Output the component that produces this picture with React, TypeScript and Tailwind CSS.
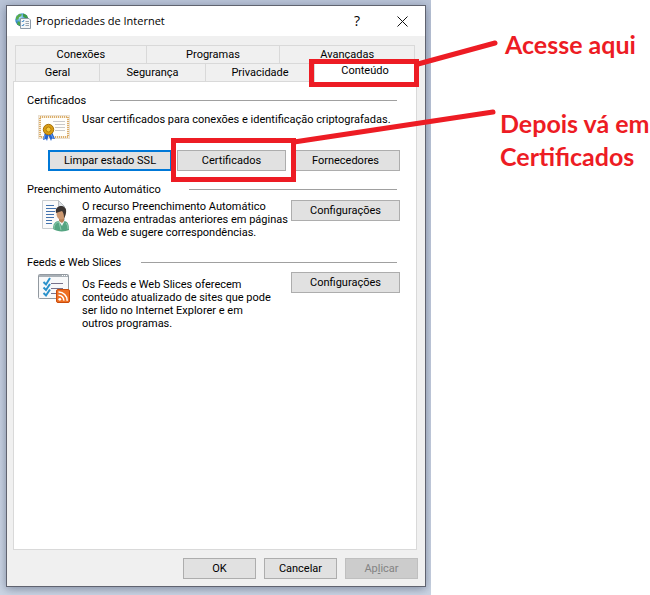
import type { ReactNode } from 'react';

interface SectionProps {
  title: string;
  lineGap: string;
  children: ReactNode;
}

interface PushButtonProps {
  children: ReactNode;
  className?: string;
  disabled?: boolean;
  focused?: boolean;
}

const uiFont = 'font-[Roboto,sans-serif]';

function PushButton({ children, className = '', disabled, focused }: PushButtonProps) {
  const look = disabled
    ? 'border border-[#bfbfbf] bg-[#cccccc] text-[#838383]'
    : focused
      ? 'border-2 border-[#0078d7] bg-[#e1e1e1]'
      : 'border border-[#adadad] bg-[#e1e1e1]';

  return (
    <button
      type="button"
      disabled={disabled}
      className={`flex h-[21px] shrink-0 items-center justify-center leading-[13px] ${look} ${className}`}
    >
      {children}
    </button>
  );
}

function Section({ title, lineGap, children }: SectionProps) {
  return (
    <section>
      <div className={`flex items-center pr-[3px] ${lineGap}`}>
        <h2 className="leading-[13px] whitespace-nowrap">{title}</h2>
        <span className="h-px flex-1 bg-[#a0a0a0]" />
      </div>
      {children}
    </section>
  );
}

function InternetIcon() {
  return (
    <svg viewBox="0 0 16 16" className="size-4 shrink-0" aria-hidden="true">
      <defs>
        <radialGradient id="globe" cx="0.35" cy="0.3" r="0.8">
          <stop offset="0" stopColor="#b9e4fa" />
          <stop offset="0.5" stopColor="#3c93cc" />
          <stop offset="1" stopColor="#12407c" />
        </radialGradient>
      </defs>
      <circle cx="6.8" cy="6.8" r="6.6" fill="url(#globe)" />
      <path d="M1 4 4 1l3 .2-1 2-2 1-.5 2L1 7Z" fill="#5aab4b" />
      <path d="M8 .4 11.5 2l1.6 3-2.5.3L8 3.5Z" fill="#3f9a45" />
      <path d="M3 8.2 5 9v4L2 11.2Z" fill="#4ba84a" />
      <path d="M5.5 5.5H14L15.500 7v8.500h-10Z" fill="#f4f6f8" stroke="#8d9aa8" />
      <path d="m6.8 8 1 1 1.3-2M6.8 12l1 1 1.3-2" fill="none" stroke="#3484c4" />
      <path d="M10.5 8.500H14M10.5 10.500H14M10.5 12.500H14" stroke="#9aa4ae" />
    </svg>
  );
}

function CertificateIcon() {
  return (
    <svg viewBox="0 0 32 32" className="size-8 shrink-0" aria-hidden="true">
      <rect x="0.5" y="2.5" width="31" height="23" fill="#f6ecdc" stroke="#e9dfd0" />
      <rect x="3" y="5" width="26" height="18" fill="#fffefa" />
      <rect x="2" y="4" width="28" height="20" fill="none" stroke="#dcae69" strokeWidth="2" strokeDasharray="1 1" />
      <path d="M15 8.500h12M17 11.500h10M17 14.500h10M17 17.500h10" stroke="#c9c9c9" />
      <path d="m7 19-2 8 3-1 1 2 2-7ZM14 19l3 7-3-.5-1 2.500-3-7Z" fill="#2464d0" />
      <path d="m7 22-1 4M13 21l2 4" stroke="#6ea3f2" />
      <circle cx="10.5" cy="16.5" r="5.2" fill="#d89d13" stroke="#a77106" />
      <circle cx="10.5" cy="16.5" r="2.5" fill="#f5cb3c" stroke="#b47b08" />
    </svg>
  );
}

function AutoCompleteIcon() {
  return (
    <svg viewBox="0 0 32 32" className="size-8 shrink-0" aria-hidden="true">
      <path d="M4.5.5h16l6 6v22h-22Z" fill="#fafafa" stroke="#c9cdd0" />
      <path d="M20.5.5v6h6Z" fill="#dfe3e6" stroke="#b9bec2" />
      <path
        d="M8 5.500h8M8 8.500h10M8 11.500h9M8 14.500h8M8 17.500h8M8 20.500h6M8 23.500h6"
        stroke="#4373ae"
      />
      <path d="M15 29c0-5 2-8 6-8h5c4 0 5 4 5 9-4 2-12 2-16-1Z" fill="#55a582" />
      <path d="M16 29c0-4 2-7 5-7l2 8M30 29c0-3-1-5-2-6" fill="none" stroke="#8fcdaf" />
      <path d="m20 20 4 6 3-6Z" fill="#f1f5f3" />
      <path d="M21 18h5v3l-2 2-3-2Z" fill="#b77f55" />
      <ellipse cx="23" cy="14" rx="4.5" ry="5.5" fill="#cc9870" />
      <path d="M18 13c-1-5 2-7 5-7s6 2 5 7c-1 3-1 4-2 5 0-4-1-6-2-7-2 1-4 1-6 2Z" fill="#3b3431" />
    </svg>
  );
}

function FeedsIcon() {
  return (
    <svg viewBox="0 0 32 32" className="size-8 shrink-0" aria-hidden="true">
      <rect x="0.5" y="2.5" width="30" height="24" rx="1" fill="#f8f9fa" stroke="#9299a0" />
      <path d="M1 4h29" stroke="#a9b0b6" strokeWidth="2" />
      <path d="M24 3.500h1M26 3.500h1M28 3.500h1" stroke="#ffffff" />
      <path d="M13 11.500h12M13 16.500h12M13 21.500h6" stroke="#77728b" />
      <path
        d="m5.500 10 2.500 2.500L12 6M5.500 15.500 8 18l4-6M5.500 21 8 23.500l4-6"
        fill="none"
        stroke="#2991cb"
        strokeWidth="2"
      />
      <rect x="18.5" y="17.5" width="13" height="13" rx="1.5" fill="#ee6f22" stroke="#c94b0b" />
      <circle cx="21.8" cy="27.3" r="1.4" fill="#ffffff" />
      <path
        d="M20.5 23.300a5 5 0 0 1 5.300 5.300M20.5 20a8.500 8.500 0 0 1 8.700 8.700"
        fill="none"
        stroke="#ffffff"
        strokeWidth="1.6"
      />
    </svg>
  );
}

function Tab({ children, selected }: { children: ReactNode; selected?: boolean }) {
  return (
    <button
      type="button"
      role="tab"
      aria-selected={!!selected}
      className={
        selected
          ? 'relative z-10 -mb-px flex h-[19px] items-center justify-center border-l border-[#d9d9d9] bg-white pb-1 leading-[13px]'
          : 'flex h-[18px] items-center justify-center border-t border-l border-[#d9d9d9] leading-[13px]'
      }
    >
      {children}
      {selected && <span className="absolute -top-1 -right-1 -bottom-[5px] -left-[6px] border-5 border-[#ed1c24]" />}
    </button>
  );
}

function Dialog() {
  return (
    <div
      role="dialog"
      aria-label="Propriedades de Internet"
      className="flex flex-1 flex-col border border-[#60636f] bg-[#f0f0f0] shadow-[0_2px_9px_rgba(40,50,80,0.45)]"
    >
      <header className="flex h-[30px] items-center bg-white pr-[17px] pl-2">
        <InternetIcon />
        <h1 className="flex-1 pl-[5px] font-['Open_Sans',sans-serif] text-[11px] leading-4">Propriedades de Internet</h1>
        <button type="button" aria-label="Ajuda" className="w-4 font-['Open_Sans',sans-serif] text-[14px] leading-4">
          ?
        </button>
        <button type="button" aria-label="Fechar" className="ml-8">
          <svg viewBox="0 0 11 11" className="size-[11px]" aria-hidden="true">
            <path d="m.5.5 10 10M10.5.5l-10 10" stroke="#111111" />
          </svg>
        </button>
      </header>

      <div className="flex flex-1 flex-col pt-[9px] pr-2 pb-[7px] pl-[6px]">
        <div role="tablist" className="mx-[2px]">
          <div className="grid grid-cols-[131fr_134fr_135fr] border-r border-[#d9d9d9]">
            <Tab>Conexões</Tab>
            <Tab>Programas</Tab>
            <Tab>Avançadas</Tab>
          </div>
          <div className="grid grid-cols-[84fr_106fr_109fr_101px]">
            <Tab>Geral</Tab>
            <Tab>Segurança</Tab>
            <Tab>Privacidade</Tab>
            <Tab selected>Conteúdo</Tab>
          </div>
        </div>

        <main className="flex-1 border border-[#d9d9d9] bg-white pt-3 pr-4 pl-[13px]">
          <Section title="Certificados" lineGap="gap-6">
            <div className="flex gap-3 pt-[6px] pl-[11px]">
              <CertificateIcon />
              <p className="flex-1 leading-[13px]">Usar certificados para conexões e identificação criptografadas.</p>
            </div>
            <div className="mt-[5px] flex justify-end gap-[5px]">
              <PushButton className="w-[124px]" focused>
                Limpar estado SSL
              </PushButton>
              <div className="relative">
                <PushButton className="w-[109px]">Certificados</PushButton>
                <span className="pointer-events-none absolute -top-3 -right-[10px] -bottom-[11px] -left-[6px] z-10 border-5 border-[#ed1c24]" />
              </div>
              <PushButton className="w-[109px]">Fornecedores</PushButton>
            </div>
          </Section>

          <div className="pt-3">
            <Section title="Preenchimento Automático" lineGap="gap-7">
              <div className="flex items-start pt-1 pl-[11px]">
                <AutoCompleteIcon />
                <p className="flex-1 pl-3 leading-[13px]">
                  O recurso Preenchimento Automático
                  <br />
                  armazena entradas anteriores em páginas
                  <br />
                  da Web e sugere correspondências.
                </p>
                <PushButton className="w-[109px]">Configurações</PushButton>
              </div>
            </Section>
          </div>

          <div className="pt-[17px]">
            <Section title="Feeds e Web Slices" lineGap="gap-5">
              <div className="flex items-start pt-[3px] pl-[11px]">
                <FeedsIcon />
                <p className="flex-1 pt-[6px] pl-3 leading-[13px]">
                  Os Feeds e Web Slices oferecem
                  <br />
                  conteúdo atualizado de sites que pode
                  <br />
                  ser lido no Internet Explorer e em
                  <br />
                  outros programas.
                </p>
                <PushButton className="w-[109px]">Configurações</PushButton>
              </div>
            </Section>
          </div>
        </main>

        <footer className="-mr-px flex justify-end gap-2 pt-2">
          <PushButton className="w-[73px]">OK</PushButton>
          <PushButton className="w-[73px]">Cancelar</PushButton>
          <PushButton className="w-[73px]" disabled>
            <span>
              Ap<u>l</u>icar
            </span>
          </PushButton>
        </footer>
      </div>
    </div>
  );
}

export default function App() {
  return (
    <div className={`relative flex min-h-screen bg-white text-[11px] text-black ${uiFont}`}>
      <div className="flex flex-1 flex-col overflow-hidden bg-linear-to-b from-[#bac5d8] to-[#cbd5e4] pt-[5px] pr-[5px] pb-2 pl-[6px]">
        <Dialog />
      </div>

      <aside className="w-[219px] shrink-0 pt-7 pl-[69px] font-['Lato',sans-serif] text-[25px] leading-[33px] font-bold whitespace-nowrap text-[#ed1c24]">
        <p className="pl-[5px]">Acesse aqui</p>
        <p className="pt-[46px]">
          Depois vá em
          <br />
          Certificados
        </p>
      </aside>

      {/* Pointer lines from the notes to the highlighted controls */}
      <svg
        viewBox="0 0 210 115"
        className="pointer-events-none absolute top-[35px] right-[150px] z-20 h-[115px] w-[210px]"
        aria-hidden="true"
      >
        <path d="M128 29 205 8M4 107 203 77" fill="none" stroke="#ed1c24" strokeWidth="5" strokeLinecap="round" />
      </svg>
    </div>
  );
}
